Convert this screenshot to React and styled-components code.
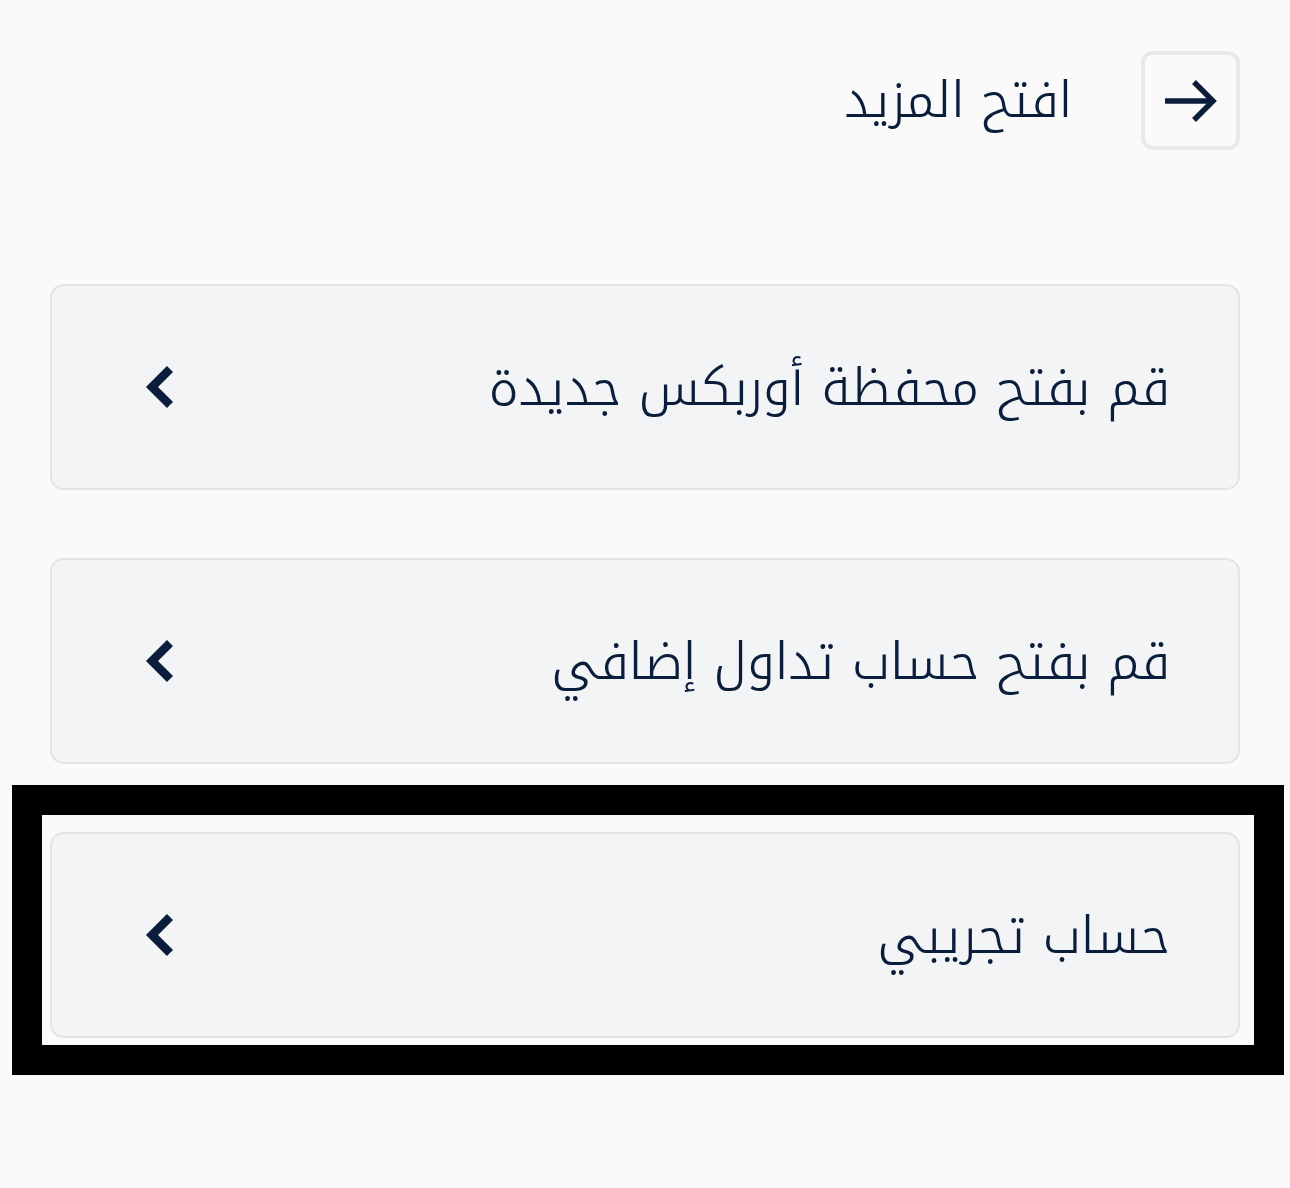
import React from "react";
import styled, { createGlobalStyle } from "styled-components";

const Global = createGlobalStyle`
  html, body { margin: 0; padding: 0; background: #fafafa; }
  body { font-family: "Noto Kufi Arabic", "Noto Sans Arabic", "DejaVu Sans", sans-serif; color: #0b1f3d; }
`;

const Page = styled.div`
  direction: rtl;
  width: 1290px;
  min-height: 1188px;
  box-sizing: border-box;
  padding: 51px 50px 0 50px;
  display: flex;
  flex-direction: column;
`;

const Header = styled.div`
  display: flex;
  align-items: center;
  gap: 69px;
  height: 99px;
  margin-bottom: 134px;
`;

const IconButton = styled.button`
  width: 99px;
  height: 99px;
  box-sizing: border-box;
  border: 4px solid #e8e9eb;
  border-radius: 12px;
  background: #fafafa;
  display: flex;
  align-items: center;
  justify-content: center;
  padding: 0;
  color: #0b1f3d;
`;

const Title = styled.span`
  font-size: 50px;
  font-weight: 350;
  line-height: 1;
  color: #0a1e3c;
`;

const List = styled.div`
  display: flex;
  flex-direction: column;
  gap: 68px;
`;

const CardWrap = styled.div`
  position: relative;
`;

const Card = styled.div`
  height: 206px;
  box-sizing: border-box;
  border: 2px solid #e4e4e6;
  border-radius: 14px;
  background: #f3f4f6;
  display: flex;
  align-items: center;
  justify-content: space-between;
  padding: 0 68px 0 91px;
`;

const CardText = styled.span`
  font-size: 51px;
  font-weight: 350;
  line-height: 1;
  color: #0a1e3c;
  padding-top: 3px;
`;

const Highlight = styled.div`
  position: absolute;
  top: -47px;
  left: -38px;
  right: -44px;
  bottom: -37px;
  border: 30px solid #000;
  pointer-events: none;
`;

const Arrow = () => (
  <svg width="56" height="44" viewBox="0 0 56 44" fill="none">
    <path d="M2 22 H51" stroke="#0a1e3c" strokeWidth="5.5" />
    <path d="M31 3 L50 22 L31 41" stroke="#0a1e3c" strokeWidth="5.5" strokeLinejoin="miter" />
  </svg>
);

const Chevron = () => (
  <svg width="34" height="48" viewBox="0 0 34 48" fill="none">
    <path d="M27 6 L9 24 L27 42" stroke="#0a1e3c" strokeWidth="8.5" strokeLinejoin="miter" />
  </svg>
);

const items = [
  { text: "قم بفتح محفظة أوربكس جديدة" },
  { text: "قم بفتح حساب تداول إضافي" },
  { text: "حساب تجريبي", highlighted: true },
];

export default function App() {
  return (
    <>
      <Global />
      <Page>
        <Header>
          <IconButton aria-label="open">
            <Arrow />
          </IconButton>
          <Title>افتح المزيد</Title>
        </Header>
        <List>
          {items.map((it) => (
            <CardWrap key={it.text}>
              <Card>
                <CardText>{it.text}</CardText>
                <Chevron />
              </Card>
              {it.highlighted && <Highlight />}
            </CardWrap>
          ))}
        </List>
      </Page>
    </>
  );
}
